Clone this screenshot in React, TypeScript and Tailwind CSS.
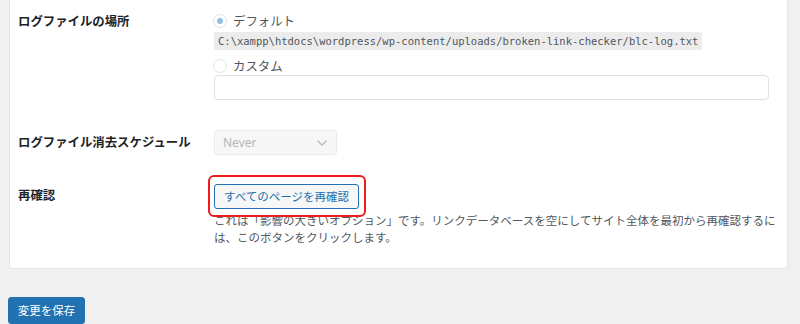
import React from 'react';

const jp = "font-['Noto_Sans_CJK_JP','Noto_Sans',sans-serif]";

const Radio = ({ checked, label }: { checked?: boolean; label: string }) => (
  <label className="flex items-center h-4 gap-[6px]">
    <span className="w-[14px] h-[14px] rounded-full border border-[#e2e4e7] bg-white flex items-center justify-center shrink-0 -ml-[1px]">
      {checked && <span className="w-[6px] h-[6px] rounded-full bg-[#8fbde8]" />}
    </span>
    <span className="text-[12.4px] leading-4 text-[#50575e]">{label}</span>
  </label>
);

export default function App() {
  return (
    <div className={`w-[800px] h-[324px] bg-[#f0f0f1] overflow-hidden ${jp}`}>
      <div className="ml-[9px] mr-[12px] bg-white border border-t-0 border-[#e5e5e5] rounded-b-[4px] pl-2 pb-[22px]">
        {/* ログファイルの場所 */}
        <div className="grid grid-cols-[196px_1fr] pt-[13px]">
          <div className="text-[12.4px] leading-4 font-bold text-[#1d2327]">ログファイルの場所</div>
          <div className="flex flex-col">
            <Radio checked label="デフォルト" />
            <div className="mt-[3px] h-[18px] flex items-center">
              <code className="h-[18px] leading-[18px] bg-[#ececec] px-[4px] text-[10.5px] text-[#50575e] font-['DejaVu_Sans_Mono',monospace]">
                C:\xampp\htdocs\wordpress/wp-content/uploads/broken-link-checker/blc-log.txt
              </code>
            </div>
            <div className="mt-2">
              <Radio label="カスタム" />
            </div>
            <input
              type="text"
              className="mt-[1px] w-[555px] h-[25px] rounded-[4px] border border-[#e0e0e0] bg-white"
            />
          </div>
        </div>

        {/* ログファイル消去スケジュール */}
        <div className="grid grid-cols-[196px_1fr] mt-[30px]">
          <div className="pt-[4px] text-[12.4px] leading-4 font-bold text-[#1d2327]">ログファイル消去スケジュール</div>
          <div>
            <div className="w-[123px] h-[25px] rounded-[3px] border border-[#ebebeb] bg-[#f7f7f7] flex items-center justify-between pl-[8px] pr-[8px]">
              <span className="text-[12px] text-[#b4b6b8] font-['Noto_Sans',sans-serif]">Never</span>
              <svg width="12" height="8" viewBox="0 0 12 8" fill="none">
                <path d="M1.5 1.5 L6 6 L10.5 1.5" stroke="#b8babc" strokeWidth="1.4" />
              </svg>
            </div>
          </div>
        </div>

        {/* 再確認 */}
        <div className="grid grid-cols-[196px_1fr] mt-[27px]">
          <div className="pt-[5px] text-[12.4px] leading-4 font-bold text-[#1d2327]">再確認</div>
          <div className="flex flex-col">
            <div className="relative self-start">
              <button className="h-[25px] px-[9px] rounded-[3px] border border-[#2271b1] bg-[#f6f7f7] text-[11.5px] leading-[23px] text-[#2271b1]">
                すべてのページを再確認
              </button>
              <div className="absolute -left-[6px] -top-[7px] -right-[7px] -bottom-[8px] rounded-[6px] border-2 border-[#ee1c1c] pointer-events-none" />
            </div>
            <p className="mt-[3px] w-[568px] text-[11.5px] leading-[17px] text-[#50575e]">
              これは「影響の大きいオプション」です。リンクデータベースを空にしてサイト全体を最初から再確認するには、このボタンをクリックします。
            </p>
          </div>
        </div>
      </div>

      <div className="pl-[8px] pt-[27px]">
        <button className="h-[27px] w-[77px] rounded-[3px] bg-[#2271b1] border border-[#2271b1] text-white text-[11.5px]">
          変更を保存
        </button>
      </div>
    </div>
  );
}
